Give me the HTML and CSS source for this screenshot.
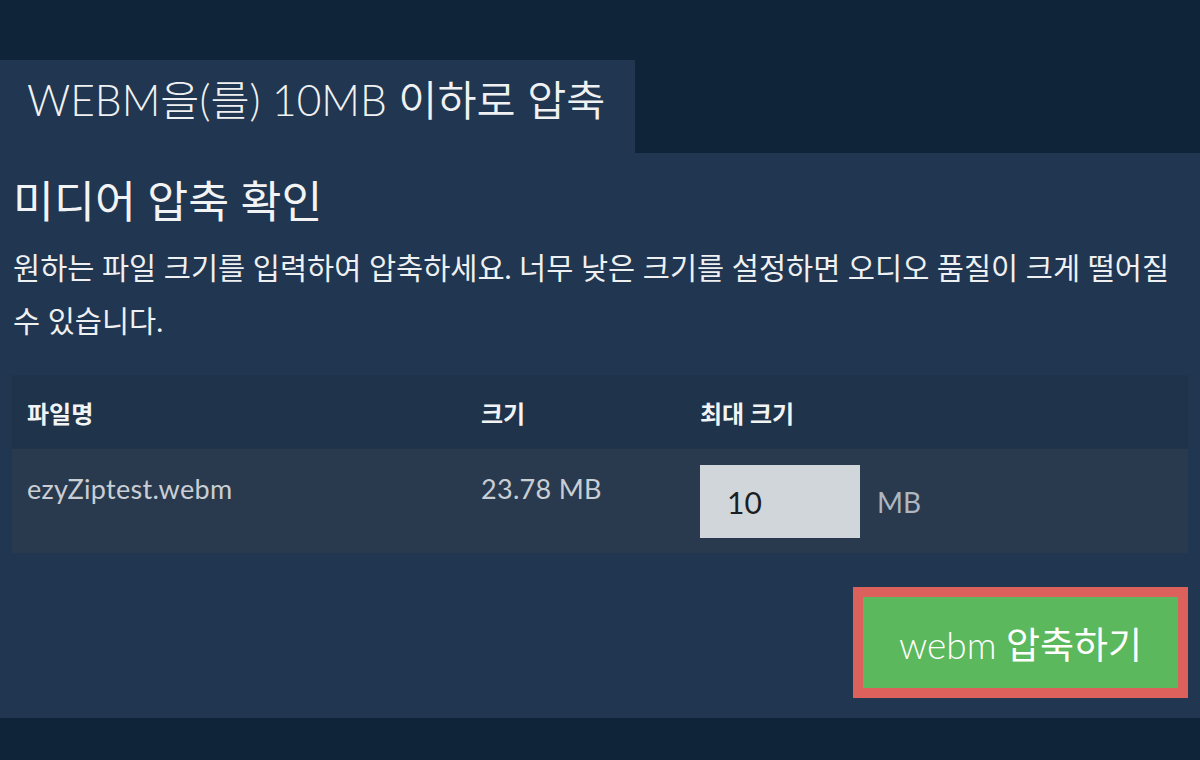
FILE: index.html
```html
<!DOCTYPE html>
<html lang="ko">
<head>
<meta charset="utf-8">
<title>WEBM 압축</title>
<link rel="stylesheet" href="styles.css">
</head>
<body>
<div class="page">
  <div class="tab"><h1 class="tab-title"><span class="lt">WEBM을(를) 10MB</span> 이하로 압축</h1></div>
  <main class="panel">
    <h2 class="heading">미디어 압축 확인</h2>
    <p class="desc">원하는 파일 크기를 입력하여 압축하세요. 너무 낮은 크기를 설정하면 오디오 품질이 크게 떨어질 수 있습니다.</p>
    <table class="files">
      <thead>
        <tr><th class="c1">파일명</th><th class="c2">크기</th><th class="c3">최대 크기</th></tr>
      </thead>
      <tbody>
        <tr>
          <td class="c1">ezyZiptest.webm</td>
          <td class="c2">23.78 MB</td>
          <td class="c3"><div class="size-field"><input class="size-input" type="text" value="10"><span class="unit">MB</span></div></td>
        </tr>
      </tbody>
    </table>
    <div class="actions">
      <button class="go"><span class="lt">webm</span> 압축하기</button>
    </div>
  </main>
</div>
</body>
</html>
```

FILE: styles.css
```css
html, body {
  margin: 0;
  padding: 0;
}
body {
  background: #0f2339;
  font-family: Lato, "Noto Sans CJK KR", sans-serif;
  color: #eef0f2;
  width: 1200px;
  height: 760px;
  overflow: hidden;
}
.page {
  padding-top: 60px;
}
.tab {
  width: 635px;
  height: 93px;
  background: #213650;
  box-sizing: border-box;
  padding: 13px 0 0 27px;
}
.tab-title {
  margin: 0;
  font-size: 42.5px;
  font-weight: 350;
  line-height: 54px;
  color: #f0f1f2;
  white-space: nowrap;
}
.lt {
  font-weight: 300;
}
.panel {
  background: #213650;
  height: 565px;
  box-sizing: border-box;
  padding: 18px 12px 0 12px;
  display: flex;
  flex-direction: column;
}
.heading {
  margin: 0 0 0 1px;
  font-size: 44.5px;
  font-weight: 400;
  line-height: 60px;
  color: #f2f3f4;
}
.desc {
  margin: 10px 0 0 1px;
  font-size: 29.5px;
  line-height: 53px;
  font-weight: 400;
  color: #eef0f2;
}
.files {
  margin-top: 28px;
  width: 1176px;
  border-collapse: collapse;
  table-layout: fixed;
}
.files th, .files td {
  padding: 0 15px;
  text-align: left;
}
.c1 { width: 424px; }
.c2 { width: 189px; }
.files thead tr {
  background: #1f344b;
  height: 74px;
}
.files th {
  font-size: 24px;
  font-weight: 700;
  color: #f2f3f4;
  vertical-align: middle;
}
.files tbody tr {
  background: #2a3a4e;
  height: 104px;
}
.files td {
  font-size: 27px;
  letter-spacing: 0.3px;
  color: #c9ced4;
  vertical-align: top;
  padding-top: 23px;
}
.files td.c3 {
  padding-top: 16px;
  letter-spacing: 0;
}
.size-field {
  display: flex;
  align-items: center;
  gap: 17px;
}
.size-input {
  width: 160px;
  height: 73px;
  box-sizing: border-box;
  border: none;
  background: #d1d6db;
  padding: 0 0 0 27px;
  font-family: Lato, sans-serif;
  font-size: 30px;
  color: #1b1f24;
  outline: none;
}
.unit {
  font-size: 28px;
  color: #aeb6c0;
}
.actions {
  display: flex;
  justify-content: flex-end;
  margin-top: 34px;
}
.go {
  width: 335px;
  height: 111px;
  box-sizing: border-box;
  border: 10px solid #dc605c;
  background: #5cb85c;
  color: #ffffff;
  font-family: Lato, "Noto Sans CJK KR", sans-serif;
  font-size: 37px;
  font-weight: 400;
  padding: 0;
  cursor: pointer;
}
```
